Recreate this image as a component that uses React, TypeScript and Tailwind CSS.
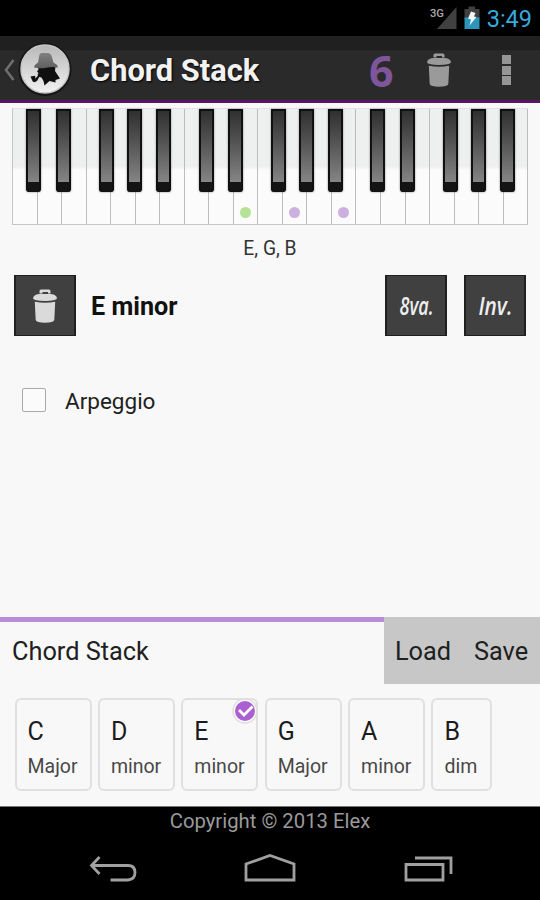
import React from "react";

const BLACK_KEYS = [26, 56, 98.5, 127, 156, 198.5, 228, 270.5, 299, 327.5, 370, 400, 443, 471, 500];
const DOTS = [
  { x: 245, color: "#b5e295" },
  { x: 294, color: "#ccb0df" },
  { x: 343.3, color: "#ccb0df" },
];

const CHORDS = [
  { root: "C", kind: "Major", size: "w-[77px]" },
  { root: "D", kind: "minor", size: "w-[77px]" },
  { root: "E", kind: "minor", size: "w-[77px]", selected: true },
  { root: "G", kind: "Major", size: "w-[77px]" },
  { root: "A", kind: "minor", size: "w-[77px]" },
  { root: "B", kind: "dim", size: "w-[61px]" },
];

function TrashIcon({ color, gap }: { color: string; gap: string }) {
  return (
    <svg width="26" height="36" viewBox="0 0 26 36" className="block shrink-0">
      <path d="M7.500 5.500V3Q7.500 1.500 9 1.500H17Q18.500 1.500 18.500 3V5.500Z" fill={color} />
      <rect x="10.500" y="4" width="5.500" height="2" fill={gap} />
      <path d="M1 10.500Q1.500 6.200 8 6H18Q24.500 6.200 25 10.500Q24 12.900 13 12.900T1 10.500Z" fill={color} />
      <path d="M2.800 13.700Q13 15.800 23.200 13.700L22.300 32Q21.500 34.700 13 34.700T3.700 32Z" fill={color} />
    </svg>
  );
}

function StatusBar() {
  return (
    <div className="flex h-9 shrink-0 items-start justify-end bg-black pr-2">
      <svg width="52" height="30" viewBox="0 0 52 30">
        <text x="1" y="16.500" fontFamily="Roboto, sans-serif" fontSize="11.500" fontWeight="500" fill="#aaa" textLength="14" lengthAdjust="spacingAndGlyphs">3G</text>
        <path d="M27.500 7V29H8Z" fill="#404040" />
        <path d="M39.500 6.500h6.500V9h4.500V19H35.500V9H39.500Z" fill="#404040" />
        <path d="M35.500 17.500h15V29h-15Z" fill="#2d94ba" />
        <path d="M42 11.500L46.500 13L45 16.500L47.500 17L40.500 25.500L42 19.500L39 18.500Z" fill="#f2f7f8" />
      </svg>
      <span className="ml-1.5 mt-1 text-[23.500px] leading-[30px] text-[#36abdc]">3:49</span>
    </div>
  );
}

function Logo() {
  return (
    <svg width="54" height="54" viewBox="0 0 54 54" className="shrink-0">
      <defs>
        <linearGradient id="disc" x1="0" y1="0" x2="0" y2="1">
          <stop offset="0" stopColor="#b8b8b8" />
          <stop offset="1" stopColor="#f2f2f2" />
        </linearGradient>
        <linearGradient id="hat" x1="0" y1="0" x2="0" y2="1">
          <stop offset="0" stopColor="#808080" />
          <stop offset="1" stopColor="#606060" />
        </linearGradient>
      </defs>
      <circle cx="27" cy="27.500" r="26.500" fill="#161616" />
      <circle cx="27" cy="27" r="24" fill="url(#disc)" stroke="#c8c8c8" strokeWidth="1.500" />
      <path d="M20 24.500H37.500L37 29L42 36.500L37.500 38L37.500 40.500L31.500 39L26.500 43.500L25.500 39L23.500 35.500L21.300 35L19.500 33L20.500 31L19 29.500L20.500 27.500Z" fill="#101010" />
      <path d="M12.500 34.500L17 33.800L17.500 36.500L20.500 33L21.800 34L19 39Q15.500 41.500 14.200 38.500Z" fill="#101010" />
      <path d="M21.500 12.500Q22 11 24 11H30Q32.500 11 33.500 13.500L35.500 20.500Q39 22 40 25.500Q34 24.500 28 25.700T16 25.500Q17 22 20 20.500Z" fill="url(#hat)" />
    </svg>
  );
}

function ActionBar() {
  return (
    <header className="flex h-[67px] shrink-0 items-center border-b-[3px] border-[#591666] bg-gradient-to-b from-[#202020] from-[22%] to-[#2a2a2a] to-[23%]">
      <svg width="18" height="24" viewBox="0 0 18 24" className="mt-1 shrink-0">
        <path d="M13.500 2L6 12L13.500 22" fill="none" stroke="#6f6f6f" strokeWidth="2.500" />
      </svg>
      <div className="pt-0.5">
        <Logo />
      </div>
      <h1 className="ml-[18px] w-[279px] pt-1.5 text-[30.800px] font-bold leading-9 text-[#f2f2f2] [text-shadow:1px_1px_2px_#000]">Chord Stack</h1>
      <span className="w-[57px] pt-1.5 text-[43px] font-bold leading-10 text-[#7f559c] [font-family:'Open_Sans',sans-serif]">6</span>
      <div className="pt-1">
        <TrashIcon color="#9a9a9a" gap="#2a2a2a" />
      </div>
      <div className="ml-[50px] flex flex-col gap-[1.500px] pt-1">
        <i className="size-[9px] bg-[#969696]" />
        <i className="size-[9px] bg-[#969696]" />
        <i className="size-[9px] bg-[#969696]" />
      </div>
    </header>
  );
}

function Piano() {
  return (
    <div className="relative mx-3 mt-[5px] flex h-[117px] shrink-0 border-y border-l border-[#c5c7c7] border-t-[#e0e2e2] bg-gradient-to-b from-[#eeefef] from-50% to-[#fbfbfb] to-53%">
      {Array.from({ length: 21 }, (_, i) => (
        <div key={i} className="flex-1 border-r border-[#bcbcbc]" />
      ))}
      {BLACK_KEYS.map((x) => (
        <div
          key={x}
          className="absolute top-0 flex h-[83px] w-[15px] flex-col rounded-b-[3px] border-x-2 border-t-2 border-[#101010] bg-[#141414] shadow-[0_0_2px_#777]"
          style={{ left: x - 13 }}
        >
          <div className="h-[71px] bg-gradient-to-b from-[#303030] to-[#858585]" />
        </div>
      ))}
      {DOTS.map((d) => (
        <div key={d.x} className="absolute top-[98px] size-[11px] rounded-full" style={{ left: d.x - 18.5, backgroundColor: d.color }} />
      ))}
    </div>
  );
}

const tile = "flex h-[61px] w-[62px] shrink-0 items-center justify-center border border-x-2 border-[#202020] bg-[#404040]";

function ChordPanel() {
  return (
    <section className="flex flex-1 flex-col">
      <p className="mt-[12px] text-center text-[19.300px] leading-6 text-[#333]">E, G, B</p>
      <div className="mt-[14px] flex items-center px-3.5">
        <button className={tile}>
          <TrashIcon color="#dadada" gap="#404040" />
        </button>
        <h2 className="ml-[15px] flex-1 pt-[3px] text-[25.200px] font-bold text-[#111]">E minor</h2>
        <button className={tile}>
          <svg width="56" height="56" viewBox="0 0 56 56">
            <text x="11.500" y="37" textLength="34" lengthAdjust="spacingAndGlyphs" fontFamily="Open Sans, sans-serif" fontSize="25.500" fontStyle="italic" fontWeight="600" fill="#eee">8va.</text>
          </svg>
        </button>
        <button className={tile + " ml-[17px]"}>
          <svg width="56" height="56" viewBox="0 0 56 56">
            <text x="11.500" y="37" textLength="34" lengthAdjust="spacingAndGlyphs" fontFamily="Open Sans, sans-serif" fontSize="25.500" fontStyle="italic" fontWeight="600" fill="#eee">Inv.</text>
          </svg>
        </button>
      </div>
      <label className="mt-[49px] flex items-center pl-[22px]">
        <span className="mb-0.5 size-6 rounded-[2px] border-[1.500px] border-[#a9a9a9] bg-[#fbfbfb]" />
        <span className="ml-[19px] text-[22.500px] leading-8 text-[#202020]">Arpeggio</span>
      </label>
    </section>
  );
}

function ChordCard({ chord }: { chord: (typeof CHORDS)[number] }) {
  return (
    <div className={"relative flex h-[93px] shrink-0 flex-col rounded-[6px] border-2 border-[#e0e0e0] pl-[11px] pt-[17px] " + chord.size}>
      <span className="text-[25px] leading-[30px] text-[#1c1c1c]">{chord.root}</span>
      <span className="mt-[8px] text-[19.500px] leading-6 text-[#484848]">{chord.kind}</span>
      {chord.selected && (
        <svg width="26" height="26" viewBox="0 0 26 26" className="absolute -right-[2px] -top-[2px]">
          <circle cx="13" cy="13" r="12" fill="#fcfcfc" stroke="#dedede" strokeWidth="1.500" />
          <circle cx="13" cy="13" r="10" fill="#ab5fd0" />
          <path d="M7 12L12 17L20.500 8.500" fill="none" stroke="#fff" strokeWidth="2.800" />
        </svg>
      )}
    </div>
  );
}

function StackPanel() {
  return (
    <section className="flex h-[189px] shrink-0 flex-col">
      <div className="flex h-[67px] shrink-0">
        <div className="w-[384px] border-t-[5px] border-[#b98cda] pl-3 pt-[13px] text-[25.300px] leading-[34px] text-[#202020]">Chord Stack</div>
        <div className="flex flex-1 items-start bg-[#c7c7c7] pl-[11px] pt-[18px] text-[25.300px] leading-[34px] text-[#202020]">
          <button className="w-[79px] text-left">Load</button>
          <button>Save</button>
        </div>
      </div>
      <div className="mt-[14px] flex gap-[6.400px] pl-[14.500px]">
        {CHORDS.map((c) => (
          <ChordCard key={c.root} chord={c} />
        ))}
      </div>
    </section>
  );
}

function BottomBar() {
  return (
    <footer className="h-[94px] shrink-0 border-t border-[#777] bg-black">
      <p className="pt-px text-center text-[20.300px] leading-[27px] text-[#9a9a9a]">Copyright © 2013 Elex</p>
      <nav className="flex justify-between px-[86px] pt-[10px]">
        <svg width="56" height="40" viewBox="0 0 56 40" fill="none" stroke="#a0a0a0" strokeWidth="2.800">
          <path d="M13.500 12L5.500 20.500L13.500 29M6 20.500H42Q49 20.500 49 27.500T42 35H24.500" />
        </svg>
        <svg width="56" height="40" viewBox="0 0 56 40" fill="none" stroke="#a0a0a0" strokeWidth="2.800">
          <path d="M4 35V19L28 10.500L52 19V35Z" />
        </svg>
        <svg width="56" height="40" viewBox="0 0 56 40" fill="none" stroke="#a0a0a0" strokeWidth="2.800">
          <path d="M8 19.500H45V35H8ZM17 13H53V29" />
        </svg>
      </nav>
    </footer>
  );
}

export default function App() {
  return (
    <div className="flex h-[900px] w-[540px] flex-col overflow-hidden bg-[#f8f8f8] [font-family:Roboto,'Noto_Sans',sans-serif]">
      <StatusBar />
      <ActionBar />
      <Piano />
      <ChordPanel />
      <StackPanel />
      <BottomBar />
    </div>
  );
}
